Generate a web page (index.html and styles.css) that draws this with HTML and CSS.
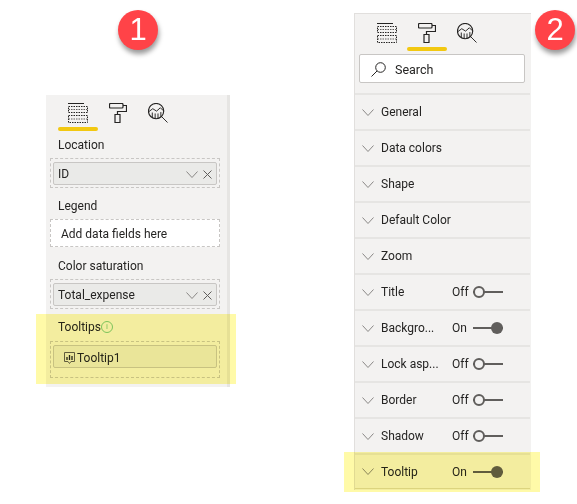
FILE: index.html
```html
<!DOCTYPE html>
<html lang="en">
<head>
  <meta charset="UTF-8">
  <meta name="viewport" content="width=device-width, initial-scale=1.0">
  <title>Tooltip settings</title>
  <link rel="stylesheet" href="styles.css">
</head>
<body>
  <svg class="sprites" width="0" height="0" aria-hidden="true">
    <symbol id="i-fields" viewBox="0 0 20 20">
      <path d="M0 .5h16" fill="none" stroke="#252423"/>
      <path d="M.5 3.500h19v6H.5zM.5 12.500h19v7H.5z" fill="none" stroke="#252423" stroke-dasharray="1.5 1"/>
      <path d="M.5 6.500h19M.5 16h19" fill="none" stroke="#605e5c" stroke-dasharray="1.5 1"/>
    </symbol>
    <symbol id="i-roller" viewBox="0 0 18 20">
      <path d="M.5 1.500q0-1 1-1h11.500q1 0 1 1v2.500q0 1-1 1H1.500q-1 0-1-1zM14 2.500h3.500v6H8.500v3M6 11.500h5v8H6z" fill="none" stroke="#252423" stroke-width="1.200"/>
    </symbol>
    <symbol id="i-analytics" viewBox="0 0 21 21">
      <circle cx="8.500" cy="8.500" r="8" fill="none" stroke="#252423" stroke-width="1.200"/>
      <path d="M1 9l4-3 4 2.500L13 5l3 3M14.500 14.500l6 6M4.500 10v5M7.500 11v5.500M10.500 11v5.500M13.500 9.500v5" fill="none" stroke="#252423"/>
    </symbol>
    <symbol id="i-chevron" viewBox="0 0 12 7">
      <path d="M.5.500 6 6.500 11.500.500" fill="none" stroke="#8a8886"/>
    </symbol>
    <symbol id="i-close" viewBox="0 0 9 9">
      <path d="M.5.500l8 8M8.500.500l-8 8" fill="none" stroke="#605e5c"/>
    </symbol>
  </svg>

  <main class="page">
    <!-- Painel de campos -->
    <section class="panel panel-fields">
      <div class="badge badge-one">1</div>
      <nav class="tabs">
        <div class="tab active"><svg class="tab-icon"><use href="#i-fields"/></svg></div>
        <div class="tab"><svg class="tab-icon roller"><use href="#i-roller"/></svg></div>
        <div class="tab"><svg class="tab-icon"><use href="#i-analytics"/></svg></div>
      </nav>

      <div class="group-label">Location</div>
      <div class="well">
        <div class="pill">
          <span class="pill-name">ID</span>
          <svg class="pill-chevron"><use href="#i-chevron"/></svg>
          <svg class="pill-close"><use href="#i-close"/></svg>
        </div>
      </div>

      <div class="group-label">Legend</div>
      <div class="well well-empty">Add data fields here</div>

      <div class="group-label">Color saturation</div>
      <div class="well">
        <div class="pill">
          <span class="pill-name">Total_expense</span>
          <svg class="pill-chevron"><use href="#i-chevron"/></svg>
          <svg class="pill-close"><use href="#i-close"/></svg>
        </div>
      </div>

      <div class="group-label tooltips-label">Tooltips<span class="info">i</span></div>
      <div class="well well-tall">
        <div class="pill pill-report">
          <svg class="report-icon" viewBox="0 0 11 12">
            <path d="M.5.500h10v9H7l-1.500 2-1.500-2H.5z" fill="none" stroke="#605e5c"/>
            <path d="M3 8V5M5.500 8V3M8 8V4" fill="none" stroke="#252423" stroke-width="1.300"/>
          </svg>
          <span class="pill-name">Tooltip1</span>
        </div>
      </div>

      <div class="highlight highlight-fields"></div>
    </section>

    <!-- Painel de formatação -->
    <section class="panel panel-format">
      <div class="badge badge-two">2</div>
      <nav class="tabs">
        <div class="tab"><svg class="tab-icon"><use href="#i-fields"/></svg></div>
        <div class="tab active"><svg class="tab-icon roller"><use href="#i-roller"/></svg></div>
        <div class="tab"><svg class="tab-icon"><use href="#i-analytics"/></svg></div>
      </nav>

      <div class="search">
        <svg class="search-icon" viewBox="0 0 15 15">
          <circle cx="9.500" cy="5.500" r="4.800" fill="none" stroke="#252423"/>
          <path d="M6 9 .5 14.500" fill="none" stroke="#252423"/>
        </svg>
        Search
      </div>

      <div class="rows">
        <div class="row"><svg class="row-chevron"><use href="#i-chevron"/></svg><span class="row-name">General</span></div>
        <div class="row"><svg class="row-chevron"><use href="#i-chevron"/></svg><span class="row-name">Data colors</span></div>
        <div class="row"><svg class="row-chevron"><use href="#i-chevron"/></svg><span class="row-name">Shape</span></div>
        <div class="row"><svg class="row-chevron"><use href="#i-chevron"/></svg><span class="row-name">Default Color</span></div>
        <div class="row"><svg class="row-chevron"><use href="#i-chevron"/></svg><span class="row-name">Zoom</span></div>
        <div class="row"><svg class="row-chevron"><use href="#i-chevron"/></svg><span class="row-name">Title</span><span class="state">Off</span><span class="toggle"></span></div>
        <div class="row"><svg class="row-chevron"><use href="#i-chevron"/></svg><span class="row-name">Backgro...</span><span class="state">On</span><span class="toggle on"></span></div>
        <div class="row"><svg class="row-chevron"><use href="#i-chevron"/></svg><span class="row-name">Lock asp...</span><span class="state">Off</span><span class="toggle"></span></div>
        <div class="row"><svg class="row-chevron"><use href="#i-chevron"/></svg><span class="row-name">Border</span><span class="state">Off</span><span class="toggle"></span></div>
        <div class="row"><svg class="row-chevron"><use href="#i-chevron"/></svg><span class="row-name">Shadow</span><span class="state">Off</span><span class="toggle"></span></div>
        <div class="row"><svg class="row-chevron"><use href="#i-chevron"/></svg><span class="row-name">Tooltip</span><span class="state">On</span><span class="toggle on"></span></div>
      </div>

      <div class="highlight highlight-format"></div>
    </section>
  </main>
</body>
</html>
```

FILE: styles.css
```css
body {
  margin: 0;
  background: #fff;
  color: #252423;
  font-family: Roboto, "Liberation Sans", sans-serif;
  font-size: 12px;
}

.sprites {
  display: block;
}

.page {
  display: flex;
  align-items: flex-start;
  height: 504px;
  padding-left: 46px;
  box-sizing: border-box;
  overflow: hidden;
  background: #fff;
  isolation: isolate;
}

.panel {
  position: relative;
  background: #f3f2f1;
  box-sizing: border-box;
}

.panel-fields {
  width: 184px;
  height: 292px;
  margin-top: 95px;
  padding-top: 8px;
  border-right: 3px solid #e6e5e3;
}

.panel-format {
  width: 177px;
  height: 477px;
  margin-top: 13px;
  margin-left: 124px;
  padding-top: 9px;
  border-top: 1px solid #e1dfdd;
  border-left: 1px solid #e1dfdd;
}

/* Badges numerados */
.badge {
  position: absolute;
  width: 40px;
  height: 40px;
  border-radius: 50%;
  background: #ff4348;
  box-shadow: 1px 4px 5px rgba(0, 0, 0, 0.4);
  color: #fff;
  font-family: "Liberation Sans", sans-serif;
  font-size: 31px;
  line-height: 40px;
  text-align: center;
}

.badge-one {
  top: -85px;
  left: 72px;
}

.badge-two {
  top: -4px;
  left: 180px;
}

/* Abas */
.tabs {
  display: flex;
  height: 24px;
  margin-left: 12px;
}

.tab {
  position: relative;
  display: flex;
  justify-content: center;
  width: 40px;
}

.tab.active::after {
  content: "";
  position: absolute;
  left: 0;
  right: 0;
  top: 24px;
  height: 4px;
  border-radius: 2px;
  background: #f2c811;
}

.tab-icon {
  width: 20px;
  height: 20px;
}

.tab-icon.roller {
  width: 18px;
}

/* Grupos de campos */
.group-label {
  height: 16px;
  margin: 0 0 5px 12px;
  line-height: 17px;
}

.panel-fields .tabs {
  margin-bottom: 10px;
}

.well {
  display: flex;
  align-items: flex-start;
  width: 170px;
  height: 30px;
  margin: 0 0 10px 4px;
  padding: 3px 2px;
  box-sizing: border-box;
  border: 1px dashed #c8c6c4;
}

.well-empty {
  align-items: center;
  height: 28px;
  margin-bottom: 11px;
  padding: 2px 0 0 10px;
  background: #fff;
}

.well-tall {
  height: 37px;
}

.pill {
  display: flex;
  align-items: center;
  flex: 1;
  height: 23px;
  padding: 1px 4px 0;
  box-sizing: border-box;
  border: 1px solid #c8c6c4;
  border-radius: 2px;
  background: #eaeae8;
}

.pill-report {
  padding-top: 2px;
}

.pill-name {
  flex: 1;
}

.pill-chevron {
  width: 12px;
  height: 7px;
  margin-right: 5px;
}

.pill-close {
  width: 9px;
  height: 9px;
}

.report-icon {
  width: 11px;
  height: 12px;
  margin: 0 2px 0 6px;
}

.tooltips-label {
  display: flex;
  align-items: center;
  margin-bottom: 6px;
}

.info {
  width: 10px;
  height: 10px;
  border: 1px solid #7dc88a;
  border-radius: 50%;
  color: #7dc88a;
  font-size: 8px;
  line-height: 10px;
  text-align: center;
}

/* Destaque amarelo */
.highlight {
  position: absolute;
  background: #fffaa8;
  mix-blend-mode: multiply;
}

.highlight-fields {
  top: 219px;
  left: -10px;
  width: 200px;
  height: 70px;
}

.highlight-format {
  top: 438px;
  left: -11px;
  width: 196px;
  height: 40px;
}

/* Busca */
.search {
  display: flex;
  align-items: center;
  gap: 9px;
  width: 166px;
  height: 29px;
  margin: 7px 0 10px 4px;
  padding: 1px 0 0 11px;
  box-sizing: border-box;
  border: 1px solid #c8c6c4;
  border-radius: 2px;
  background: #fff;
  font-size: 12.500px;
}

.search-icon {
  width: 15px;
  height: 15px;
}

/* Linhas de formatação */
.rows {
  width: 175px;
}

.row {
  display: flex;
  align-items: center;
  height: 36px;
  padding-left: 7px;
  box-sizing: border-box;
  border-top: 2px solid #e6e5e3;
}

.row:last-child {
  border-bottom: 1px solid #dcd9c0;
}

.row-chevron {
  width: 12px;
  height: 7px;
  margin-right: 7px;
}

.row-name {
  width: 71px;
  white-space: nowrap;
}

.state {
  width: 21px;
}

.toggle {
  position: relative;
  width: 30px;
  height: 2px;
  background: #605e5c;
}

.toggle::after {
  content: "";
  position: absolute;
  top: -5px;
  left: 0;
  width: 8px;
  height: 8px;
  border: 2px solid #605e5c;
  border-radius: 50%;
  background: #f3f2f1;
}

.toggle.on::after {
  top: -5px;
  left: 18px;
  width: 12px;
  height: 12px;
  border: 0;
  background: #605e5c;
}
```
